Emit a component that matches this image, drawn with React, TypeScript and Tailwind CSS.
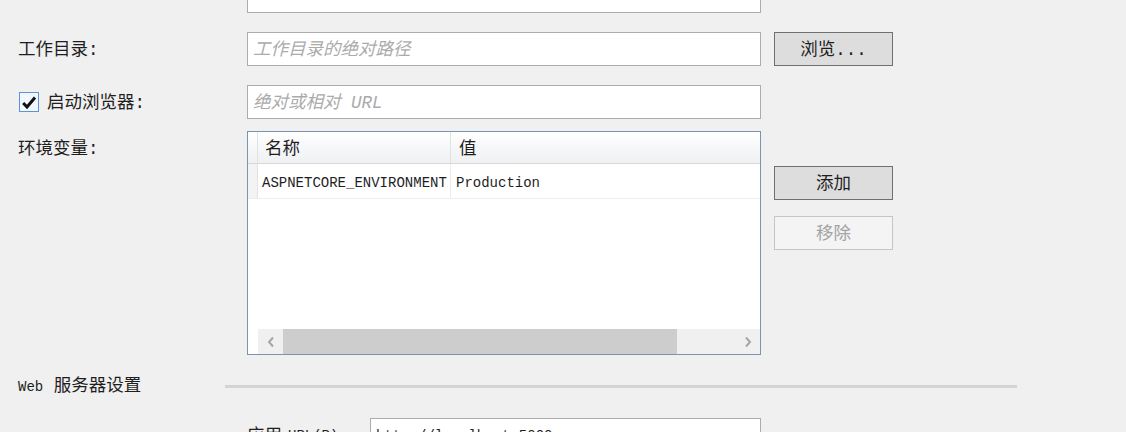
import React from "react";

const CJK = { fontFamily: '"Liberation Mono", "Noto Sans CJK SC", monospace' };
const MONO = { fontFamily: '"Liberation Mono", "DejaVu Sans Mono", monospace' };

function Input({ placeholder, value, className = "" }: { placeholder?: string; value?: string; className?: string }) {
  return (
    <div className={`h-[34px] bg-white border border-[#acacac] flex items-center pl-[5px] pt-[2px] overflow-hidden ${className}`}>
      {placeholder ? (
        <span className="italic text-[17.5px] text-[#ababab] whitespace-nowrap" style={CJK}>
          {placeholder}
        </span>
      ) : null}
      {value ? (
        <span className="text-[14px] text-[#1e1e1e] whitespace-nowrap" style={MONO}>
          {value}
        </span>
      ) : null}
    </div>
  );
}

function Button({ children, disabled }: { children: React.ReactNode; disabled?: boolean }) {
  return (
    <div
      className={`w-[119px] h-[34px] flex items-center justify-center pt-[2px] text-[17.5px] border ${
        disabled ? "bg-[#f4f4f4] border-[#c5c5c5] text-[#a3a3a3]" : "bg-[#dddddd] border-[#707070] text-[#1e1e1e]"
      }`}
      style={CJK}
    >
      {children}
    </div>
  );
}

function Label({ children }: { children: React.ReactNode }) {
  return (
    <div className="w-[229px] h-[34px] flex items-center pt-[2px] text-[17.5px] text-[#1e1e1e] whitespace-nowrap" style={CJK}>
      {children}
    </div>
  );
}

export default function App() {
  return (
    <div className="w-[1126px] h-[432px] overflow-hidden bg-[#f0f0f0] flex flex-col pl-[18px]">
      {/* Row 0 (cut off) */}
      <div className="flex -mt-[21px]">
        <div className="w-[229px]" />
        <Input className="w-[514px]" />
      </div>

      {/* Row 1 */}
      <div className="flex mt-[19px] items-center">
        <Label>工作目录:</Label>
        <Input className="w-[514px]" placeholder="工作目录的绝对路径" />
        <div className="ml-[13px]">
          <Button>浏览...</Button>
        </div>
      </div>

      {/* Row 2 */}
      <div className="flex mt-[19px] items-center">
        <div className="w-[229px] h-[34px] flex items-center">
          <div className="w-[20px] h-[20px] ml-[1px] border border-[#5a95d8] bg-[#f2f7fe] flex items-center justify-center">
            <svg width="16" height="15" viewBox="0 0 16 15">
              <path d="M2.2 8 L6 12 L14 2.5" fill="none" stroke="#111" strokeWidth="3" strokeLinecap="butt" strokeLinejoin="miter" />
            </svg>
          </div>
          <span className="ml-[8px] pt-[2px] text-[17.5px] text-[#1e1e1e]" style={CJK}>
            启动浏览器:
          </span>
        </div>
        <Input className="w-[514px]" placeholder="绝对或相对 URL" />
      </div>

      {/* Row 3: env vars */}
      <div className="flex mt-[12px]">
        <div className="w-[229px]">
          <Label>环境变量:</Label>
        </div>
        <div className="w-[514px] h-[224px] border border-[#7a94b4] bg-white flex flex-col">
          <div className="h-[32px] flex bg-gradient-to-b from-white to-[#eef0f3] border-b border-[#d8d8d8]">
            <div className="w-[10px] border-r border-[#e2e2e2]" />
            <div className="w-[193px] border-r border-[#e2e2e2] flex items-center pl-[7px] pt-[3px] text-[17.5px] text-[#1e1e1e]" style={CJK}>
              名称
            </div>
            <div className="flex-1 flex items-center pl-[8px] pt-[3px] text-[17.5px] text-[#1e1e1e]" style={CJK}>
              值
            </div>
          </div>
          <div className="h-[35px] flex border-b border-[#eeeeee]">
            <div className="w-[10px] bg-[#f3f3f3] border-r border-[#e2e2e2]" />
            <div className="w-[193px] border-r border-[#ececec] flex items-center pl-[4px] pt-[4px] text-[14px] text-[#1e1e1e]" style={MONO}>
              ASPNETCORE_ENVIRONMENT
            </div>
            <div className="flex-1 flex items-center pl-[5px] pt-[4px] text-[14px] text-[#1e1e1e]" style={MONO}>
              Production
            </div>
          </div>
          <div className="flex-1" />
          <div className="h-[25px] flex">
            <div className="w-[10px] bg-white" />
            <div className="flex-1 flex bg-[#f0f0f0]">
              <div className="w-[25px] flex items-center justify-center">
                <svg width="8" height="12" viewBox="0 0 8 12">
                  <path d="M6 1.5 L2 6 L6 10.5" fill="none" stroke="#a6a6a6" strokeWidth="2" />
                </svg>
              </div>
              <div className="w-[394px] bg-[#cdcdcd]" />
              <div className="flex-1" />
              <div className="w-[25px] flex items-center justify-center">
                <svg width="8" height="12" viewBox="0 0 8 12">
                  <path d="M2 1.5 L6 6 L2 10.5" fill="none" stroke="#a6a6a6" strokeWidth="2" />
                </svg>
              </div>
            </div>
          </div>
        </div>
        <div className="ml-[13px] pt-[35px] flex flex-col gap-[16px]">
          <Button>添加</Button>
          <Button disabled>移除</Button>
        </div>
      </div>

      {/* Section header */}
      <div className="flex items-center mt-[19px] h-[24px]">
        <div className="w-[207px] text-[17.5px] text-[#1e1e1e] whitespace-nowrap pt-[1px]" style={CJK}>
          <span className="text-[14px]" style={MONO}>Web</span> 服务器设置
        </div>
        <div className="w-[792px] h-[3px] bg-[#d4d4d4]" />
      </div>

      {/* Bottom row (cut off) */}
      <div className="flex mt-[20px] items-center">
        <div className="w-[229px]" />
        <div className="w-[123px] h-[34px] flex items-center pt-[2px] text-[17.5px] text-[#1e1e1e] whitespace-nowrap" style={CJK}>
          应用 <span className="text-[14px] ml-[6px]" style={MONO}>URL(P):</span>
        </div>
        <Input className="w-[391px]" value="http://localhost:5000" />
      </div>
    </div>
  );
}
